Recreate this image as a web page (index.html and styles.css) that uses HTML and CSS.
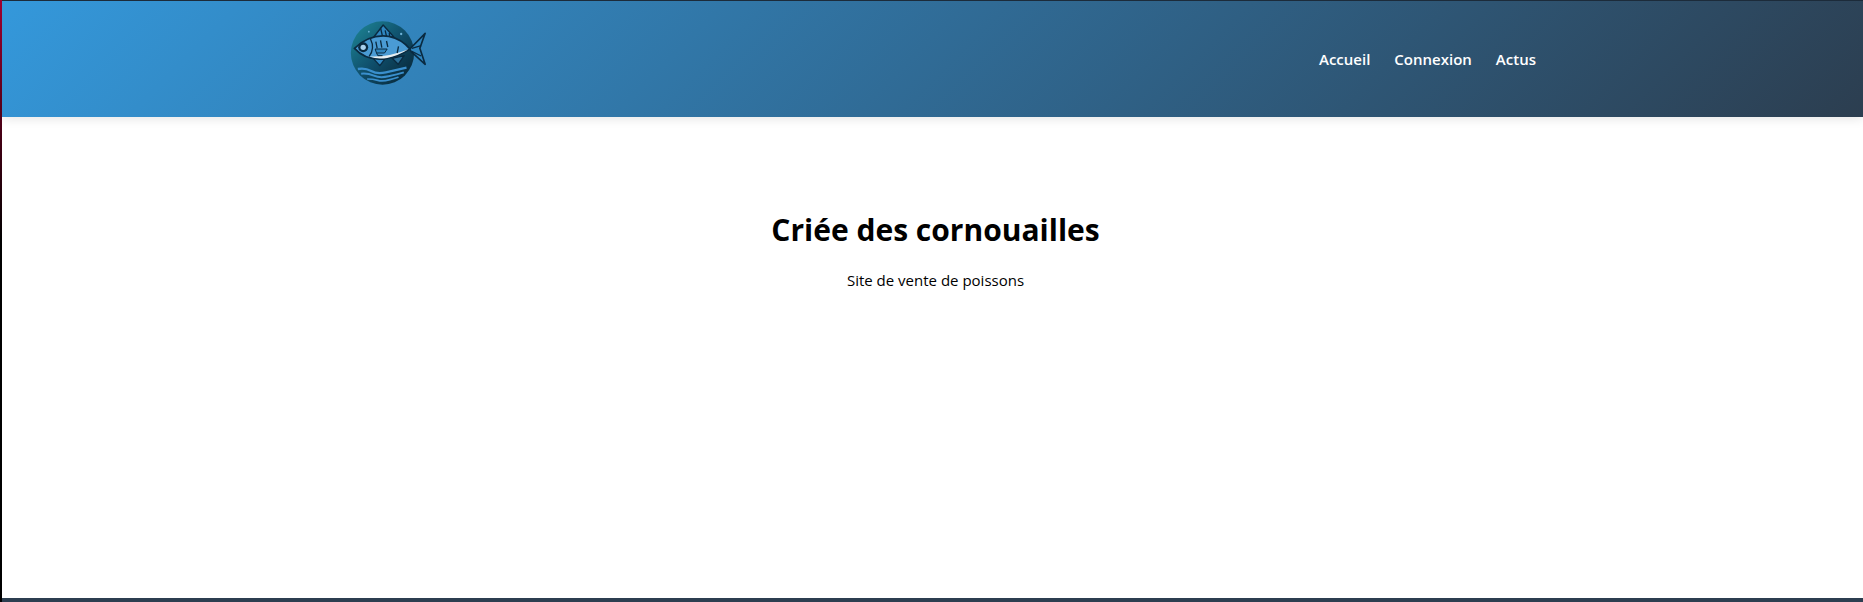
FILE: index.html
```html
<!DOCTYPE html>
<html lang="fr">
<head>
  <meta charset="UTF-8">
  <title>Criée des cornouailles</title>
  <link rel="stylesheet" href="styles.css">
</head>
<body>
<header class="site-header">
  <div class="header-inner">
    <a class="logo" href="#" aria-label="Criée des cornouailles">
      <svg width="82" height="70" viewBox="50 55 245 210">
        <defs>
          <linearGradient id="disc" x1="0" y1="0" x2="1" y2="1">
            <stop offset="0" stop-color="#1f8a98"/>
            <stop offset="0.5" stop-color="#0f4f6c"/>
            <stop offset="1" stop-color="#07202f"/>
          </linearGradient>
        </defs>
        <circle cx="156" cy="160" r="95" fill="url(#disc)"/>
        <!-- dorsal fin -->
        <path d="M130 112 158 76 190 112z" fill="#2f86c0" stroke="#0a2a40" stroke-width="4" stroke-linejoin="round"/>
        <path d="M150 84l6 26M164 92l4 18M176 100l2 10" stroke="#0a2a40" stroke-width="4" fill="none"/>
        <!-- lower fins -->
        <path d="M128 176l34 4-14 18z" fill="#2f86c0" stroke="#0a2a40" stroke-width="4" stroke-linejoin="round"/>
        <path d="M185 176l36-8-18 26z" fill="#2b6f98" stroke="#0a2a40" stroke-width="4" stroke-linejoin="round"/>
        <!-- body -->
        <path d="M72 146Q118 102 175 110 214 118 238 148 204 170 170 176 108 186 72 146z" fill="#4a9bd4" stroke="#0a2a40" stroke-width="5"/>
        <path d="M116 170Q172 174 234 149 204 168 170 175 140 180 116 170z" fill="#e8eef0"/>
        <!-- tail -->
        <path d="M238 148 284 101 268 146 284 194 242 156z" fill="#2f86c0" stroke="#0a2a40" stroke-width="5" stroke-linejoin="round"/>
        <path d="M244 146l28-8M244 155l28 14" stroke="#0a2a40" stroke-width="4" fill="none"/>
        <!-- eye, gill, scales -->
        <circle cx="98" cy="143" r="15" fill="#0a2a40"/>
        <circle cx="98" cy="143" r="8" fill="#a9d0ec"/>
        <path d="M120 118q14 28-4 52" stroke="#0a2a40" stroke-width="4" fill="none"/>
        <path d="M136 126l4 20M150 122l4 22M168 124l4 18M204 140l-4 20" stroke="#0a2a40" stroke-width="4" fill="none"/>
        <path d="M134 148h36l-8 12h-24zM138 160l4 8h14" fill="#2f86c0" stroke="#0a2a40" stroke-width="3"/>
        <!-- waves -->
        <path d="M82 208q22-4 40 6t44 4 62-14" stroke="#3a8fcd" stroke-width="7" fill="none"/>
        <path d="M92 222q20-2 38 6t44 2 46-12" stroke="#3a8fcd" stroke-width="6" fill="none"/>
        <path d="M110 238q18 0 32 4t36-2 26-8" stroke="#3a8fcd" stroke-width="5" fill="none"/>
        <circle cx="115" cy="96" r="2.5" fill="#6fb3d8"/>
        <circle cx="212" cy="103" r="3.5" fill="#6fb3d8"/>
      </svg>
    </a>
    <nav class="main-nav">
      <a href="#">Accueil</a>
      <a href="#">Connexion</a>
      <a href="#">Actus</a>
    </nav>
  </div>
</header>

<main class="content">
  <h1>Criée des cornouailles</h1>
  <p>Site de vente de poissons</p>
</main>

<footer class="site-footer"></footer>
</body>
</html>
```

FILE: styles.css
```css
html, body { height: 100%; margin: 0; }
body {
  box-sizing: border-box;
  display: flex;
  flex-direction: column;
  height: 602px;
  overflow: hidden;
  background: #fff;
  color: #000;
  font-family: "Open Sans", "Noto Sans", sans-serif;
  border-left: 2px solid;
  border-image: linear-gradient(to bottom, #a00030, #000 40%) 1;
}
.site-header {
  height: 116px;
  border-top: 1px solid #1c2b3a;
  background: linear-gradient(135deg, #3498db, #2c3e50);
  box-shadow: 0 2px 10px rgba(0, 0, 0, 0.1);
}
.header-inner {
  display: flex;
  justify-content: space-between;
  align-items: center;
  box-sizing: border-box;
  width: 1200px;
  height: 100%;
  margin-left: 334px;
}
.logo { display: block; height: 70px; margin: -12px 0 0 11px; }
.main-nav { display: flex; gap: 24px; }
.main-nav a { color: #fff; font-size: 15px; font-weight: 600; text-decoration: none; }
.content { flex: 1; padding: 92px 0 0 6px; text-align: center; }
.content h1 { margin: 0; font-size: 30px; line-height: 41px; font-weight: 700; }
.content p { margin: 20px 0 0; font-size: 15px; line-height: 20px; }
.site-footer { height: 4px; background: #2c3e50; }
```
